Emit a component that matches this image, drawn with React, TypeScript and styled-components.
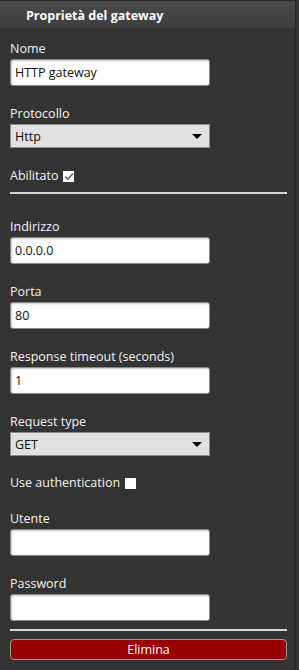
import React, { useState } from 'react';
import styled, { createGlobalStyle } from 'styled-components';

const GlobalStyle = createGlobalStyle`
  html, body {
    margin: 0;
    padding: 0;
    background: #333333;
  }
  body {
    font-family: 'Open Sans', 'Noto Sans', sans-serif;
  }
`;

const Panel = styled.div`
  width: 296px;
  min-height: 670px;
  box-sizing: border-box;
  background: #333333;
  border-top: 1px solid #262626;
  border-right: 1px solid #262626;
  display: flex;
  flex-direction: column;
`;

const Header = styled.div`
  height: 27px;
  box-sizing: border-box;
  flex-shrink: 0;
  display: flex;
  align-items: center;
  padding: 3px 0 0 26px;
  background: linear-gradient(to bottom, #4a4a4a, #3e3e3e);
  border-bottom: 1px solid #3a3a3a;
  color: #ffffff;
  font-weight: 700;
  font-size: 12.5px;
`;

const Body = styled.div`
  display: flex;
  flex-direction: column;
  padding: 12px 9px 0 10px;
`;

const Field = styled.div<{ $gap?: number }>`
  display: flex;
  flex-direction: column;
  flex-shrink: 0;
  margin-bottom: ${(p) => p.$gap ?? 19}px;
`;

const Label = styled.label`
  color: #f2f2f2;
  font-size: 12.5px;
  line-height: 18px;
  margin-bottom: 1px;
`;

const TextInput = styled.input`
  width: 200px;
  height: 27px;
  box-sizing: border-box;
  border: 1px solid #8a8a8a;
  border-radius: 3px;
  box-shadow: inset 1px 1px 2px #c8c8c8;
  background: #ffffff;
  padding: 0 4px;
  font-family: inherit;
  font-size: 12.5px;
  color: #111;
  outline: none;
`;

const SelectBox = styled.div`
  width: 200px;
  height: 24px;
  box-sizing: border-box;
  border: 1px solid #8a8a8a;
  background: #e1e1e1;
  display: flex;
  align-items: center;
  justify-content: space-between;
  padding: 0 6px 0 4px;
  font-size: 12.5px;
  color: #111;
`;

const Arrow = styled.span`
  width: 0;
  height: 0;
  border-left: 5px solid transparent;
  border-right: 5px solid transparent;
  border-top: 5px solid #000;
  margin-right: 1px;
`;

const CheckRow = styled.div`
  display: flex;
  align-items: center;
  gap: 5px;
  color: #f2f2f2;
  font-size: 12.5px;
  line-height: 18px;
`;

const Box = styled.span`
  width: 11px;
  height: 11px;
  background: #ffffff;
  display: inline-flex;
  align-items: center;
  justify-content: center;
  margin-top: 1px;
`;

const Rule = styled.hr<{ $after?: number }>`
  width: 277px;
  margin: 0 0 ${(p) => p.$after ?? 0}px 0;
  flex-shrink: 0;
  border: none;
  border-top: 2px solid #d6d6d6;
`;

const DeleteButton = styled.button`
  width: 277px;
  height: 21px;
  flex-shrink: 0;
  box-sizing: border-box;
  background: #990000;
  border: 1px solid #9a9a9a;
  border-radius: 4px;
  color: #ffffff;
  font-family: inherit;
  font-size: 12.5px;
  padding: 0;
`;

const Check = () => (
  <svg width="10" height="9" viewBox="0 0 10 9">
    <path d="M1 4.5 L3.8 7.2 L9 1.5" fill="none" stroke="#555" strokeWidth="1.3" />
  </svg>
);

const App: React.FC = () => {
  const [nome, setNome] = useState('HTTP gateway');
  const [indirizzo, setIndirizzo] = useState('0.0.0.0');
  const [porta, setPorta] = useState('80');
  const [timeout, setTimeoutVal] = useState('1');

  return (
    <>
      <GlobalStyle />
      <Panel>
        <Header>Proprietà del gateway</Header>
        <Body>
          <Field>
            <Label>Nome</Label>
            <TextInput value={nome} onChange={(e) => setNome(e.target.value)} />
          </Field>
          <Field>
            <Label>Protocollo</Label>
            <SelectBox>
              Http
              <Arrow />
            </SelectBox>
          </Field>
          <Field $gap={7}>
            <CheckRow>
              Abilitato
              <Box>
                <Check />
              </Box>
            </CheckRow>
          </Field>
          <Rule $after={24} />
          <Field>
            <Label>Indirizzo</Label>
            <TextInput value={indirizzo} onChange={(e) => setIndirizzo(e.target.value)} />
          </Field>
          <Field>
            <Label>Porta</Label>
            <TextInput value={porta} onChange={(e) => setPorta(e.target.value)} />
          </Field>
          <Field>
            <Label>Response timeout (seconds)</Label>
            <TextInput value={timeout} onChange={(e) => setTimeoutVal(e.target.value)} />
          </Field>
          <Field $gap={18}>
            <Label>Request type</Label>
            <SelectBox>
              GET
              <Arrow />
            </SelectBox>
          </Field>
          <Field $gap={18}>
            <CheckRow>
              Use authentication
              <Box />
            </CheckRow>
          </Field>
          <Field>
            <Label>Utente</Label>
            <TextInput />
          </Field>
          <Field $gap={8}>
            <Label>Password</Label>
            <TextInput type="password" />
          </Field>
          <Rule $after={8} />
          <DeleteButton>Elimina</DeleteButton>
        </Body>
      </Panel>
    </>
  );
};

export default App;
